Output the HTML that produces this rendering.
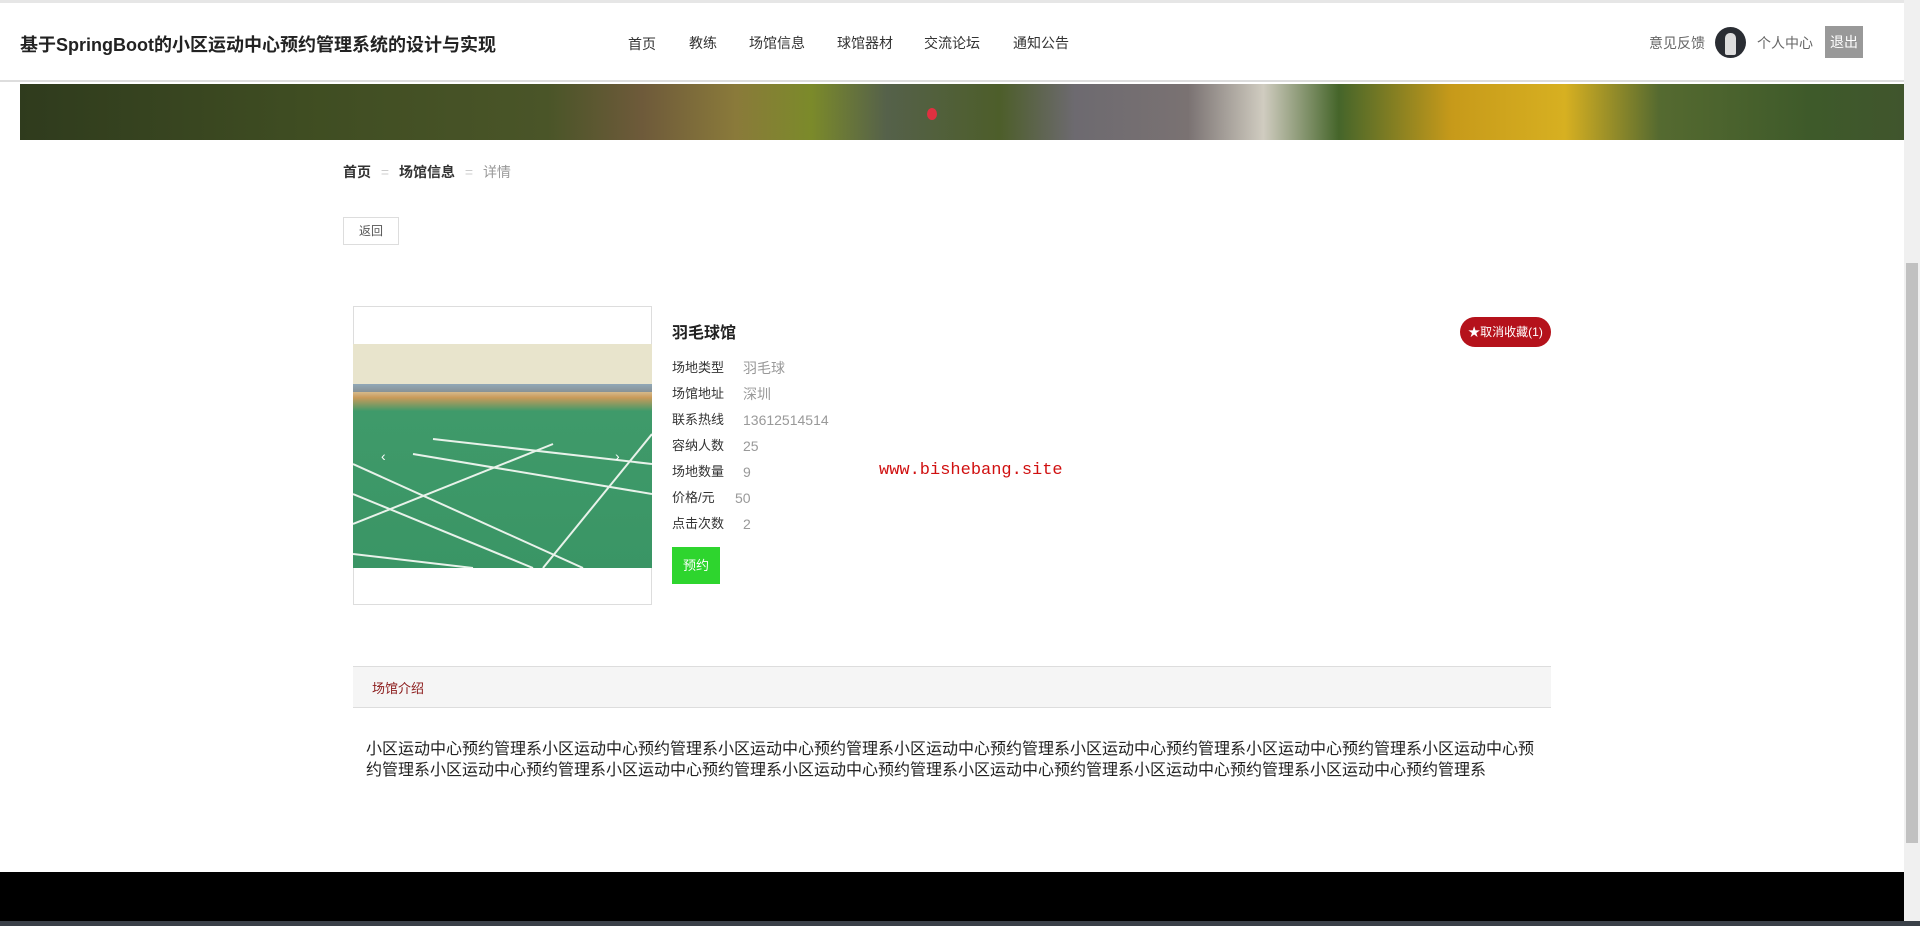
<!DOCTYPE html>
<html><head><meta charset="utf-8">
<style>
*{margin:0;padding:0;box-sizing:border-box}
body{width:1920px;height:926px;overflow:hidden;background:#fff;font-family:"Liberation Sans","Noto Sans CJK SC",sans-serif;position:relative;color:#333}
.a{position:absolute;white-space:nowrap}
</style></head><body>
<div class="a" style="left:0;top:0;width:1904px;height:3px;background:#e6e6e6"></div>
<div class="a" style="left:0;top:3px;width:1904px;height:79px;background:#fff;border-bottom:2px solid #ddd"></div>
<div class="a" style="left:20px;top:31px;font-size:18px;font-weight:bold;color:#222">基于SpringBoot的小区运动中心预约管理系统的设计与实现</div>
<div class="a" style="left:628px;top:34px;font-size:14px;color:#333">首页</div>
<div class="a" style="left:689px;top:33px;font-size:14px;color:#333">教练</div>
<div class="a" style="left:749px;top:33px;font-size:14px;color:#333">场馆信息</div>
<div class="a" style="left:837px;top:33px;font-size:14px;color:#333">球馆器材</div>
<div class="a" style="left:924px;top:33px;font-size:14px;color:#333">交流论坛</div>
<div class="a" style="left:1013px;top:33px;font-size:14px;color:#333">通知公告</div>
<div class="a" style="left:1649px;top:33px;font-size:14px;color:#666">意见反馈</div>
<div class="a" style="left:1715px;top:27px;width:31px;height:31px;border-radius:50%;background:#2a2d33;overflow:hidden"><div style="position:absolute;left:10px;top:6px;width:11px;height:22px;background:#ddd;border-radius:5px 5px 2px 2px"></div></div>
<div class="a" style="left:1757px;top:33px;font-size:14px;color:#666">个人中心</div>
<div class="a" style="left:1825px;top:26px;width:38px;height:32px;background:#999;color:#fff;font-size:14px;line-height:32px;text-align:center">退出</div>
<div class="a" style="left:1904px;top:0;width:16px;height:926px;background:#f0f0f0"></div>
<div class="a" style="left:1906px;top:263px;width:12px;height:580px;background:#c1c1c1"></div>
<div class="a" style="left:20px;top:84px;width:1884px;height:56px;background:linear-gradient(90deg,#2f3b1d 0%,#3f4d22 15%,#4a5528 28%,#6e5a3a 33%,#8a7a3a 38%,#7b8a2a 42%,#55614a 46%,#4d5e2a 52%,#6d6a70 56%,#7a7272 62%,#d0ccc0 66%,#45652a 70%,#c79a1a 76%,#d7b021 82%,#556a30 87%,#3e5a2a 95%,#40552d 100%)"></div>
<div class="a" style="left:927px;top:108px;width:10px;height:12px;border-radius:50%;background:#e03040"></div>
<div class="a" style="left:343px;top:162px;font-size:14px;color:#333;font-weight:bold">首页 <span style="color:#ccc;font-weight:normal;margin:0 6px">=</span> 场馆信息 <span style="color:#ccc;font-weight:normal;margin:0 6px">=</span> <span style="color:#999;font-weight:normal">详情</span></div>
<div class="a" style="left:343px;top:217px;width:56px;height:28px;border:1px solid #ddd;font-size:12px;color:#555;line-height:26px;text-align:center">返回</div>
<div class="a" style="left:353px;top:306px;width:299px;height:299px;border:1px solid #ddd;background:#fff"></div>
<div class="a" style="left:353px;top:344px;width:299px;height:224px;overflow:hidden;background:linear-gradient(180deg,#e8e4cc 0%,#e8e4cc 18%,#c89a5a 24%,#3f9a6a 30%,#3a9565 100%)">
<svg width="299" height="224" style="position:absolute;left:0;top:0"><g stroke="#e8f2ea" stroke-width="2" fill="none"><path d="M0 150 L180 224"/><path d="M0 120 L230 224"/><path d="M60 110 L299 150"/><path d="M80 95 L299 120"/><path d="M0 180 L200 100"/><path d="M190 224 L299 90"/><path d="M0 210 L120 224"/></g><rect x="0" y="40" width="299" height="8" fill="#3a6aa0" opacity=".5"/></svg>
<div class="a" style="left:28px;top:104px;color:#fff;font-size:14px">‹</div><div class="a" style="left:262px;top:104px;color:#fff;font-size:14px">›</div>
</div>
<div class="a" style="left:672px;top:319px;font-size:16px;color:#222;font-weight:bold">羽毛球馆</div>
<div class="a" style="left:1460px;top:317px;width:91px;height:30px;border-radius:15px;background:#b5121b;color:#fff;font-size:12px;line-height:30px;text-align:center">★取消收藏(1)</div>
<div class="a" style="left:672px;top:355px;font-size:13px;color:#333;line-height:26px">场地类型<br>场馆地址<br>联系热线<br>容纳人数<br>场地数量<br>价格/元<br>点击次数</div>
<div class="a" style="left:743px;top:355px;font-size:14px;color:#999;line-height:26px">羽毛球<br>深圳<br>13612514514<br>25<br>9<br><span style="margin-left:-8px">50</span><br>2</div>
<div class="a" style="left:879px;top:461px;font-size:17px;color:#d01010;font-family:'Liberation Mono',monospace">www.bishebang.site</div>
<div class="a" style="left:672px;top:547px;width:48px;height:37px;background:#2ed52e;color:#fff;font-size:13px;line-height:37px;text-align:center">预约</div>
<div class="a" style="left:353px;top:666px;width:1198px;height:42px;background:#f5f5f5;border:1px solid #ddd;border-left:none;border-right:none"></div>
<div class="a" style="left:372px;top:678px;font-size:13px;color:#8b1a1a">场馆介绍</div>
<div class="a" style="left:366px;top:739px;width:1172px;white-space:normal;font-size:16px;line-height:21px;color:#222;word-break:break-all">小区运动中心预约管理系小区运动中心预约管理系小区运动中心预约管理系小区运动中心预约管理系小区运动中心预约管理系小区运动中心预约管理系小区运动中心预约管理系小区运动中心预约管理系小区运动中心预约管理系小区运动中心预约管理系小区运动中心预约管理系小区运动中心预约管理系小区运动中心预约管理系</div>
<div class="a" style="left:0;top:872px;width:1904px;height:54px;background:#000"></div>
<div class="a" style="left:0;top:921px;width:1920px;height:5px;background:#3a4048"></div>
</body></html>
